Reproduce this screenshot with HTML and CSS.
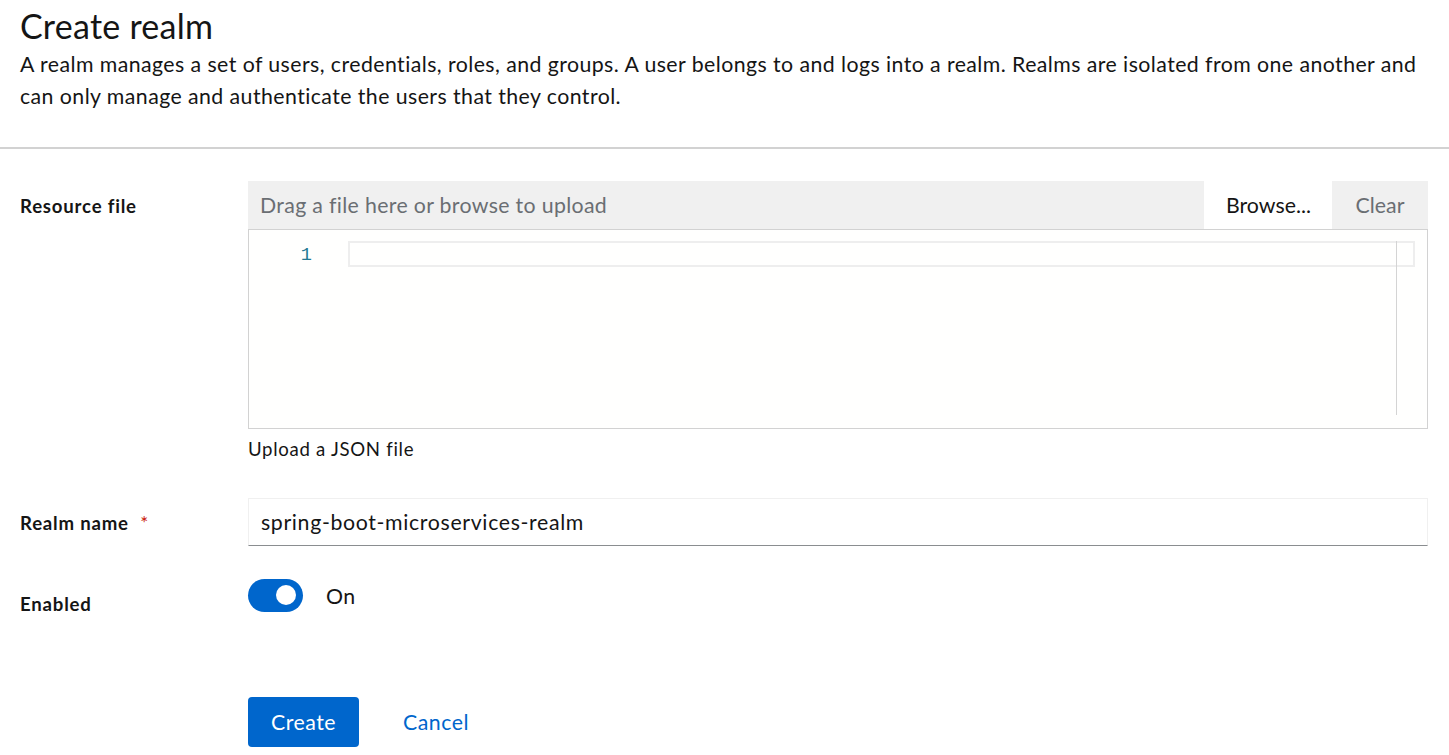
FILE: index.html
```html
<!DOCTYPE html>
<html lang="en">
<head>
<meta charset="utf-8">
<title>Create realm</title>
<link rel="stylesheet" href="styles.css">
</head>
<body>
<header class="page-header">
  <h1 class="title">Create realm</h1>
  <p class="description">A realm manages a set of users, credentials, roles, and groups. A user belongs to and logs into a realm. Realms are isolated from one another and can only manage and authenticate the users that they control.</p>
</header>
<div class="divider"></div>
<form class="form">
  <div class="label">Resource file</div>
  <div class="control">
    <div class="upload-bar">
      <span class="upload-placeholder">Drag a file here or browse to upload</span>
      <button type="button" class="browse">Browse...</button>
      <button type="button" class="clear">Clear</button>
    </div>
    <div class="editor">
      <div class="gutter"><span class="line-no">1</span></div>
      <div class="code">
        <div class="current-line"></div>
        <div class="ruler"></div>
      </div>
    </div>
    <div class="helper">Upload a JSON file</div>
  </div>

  <div class="label">Realm name <span class="required">*</span></div>
  <div class="control">
    <div class="text-input">spring-boot-microservices-realm</div>
  </div>

  <div class="label row-enabled">Enabled</div>
  <div class="control switch-row row-enabled">
    <span class="switch"><span class="knob"></span></span>
    <span class="switch-label">On</span>
  </div>

  <div class="label empty"></div>
  <div class="control actions">
    <button type="button" class="btn-primary">Create</button>
    <button type="button" class="btn-link">Cancel</button>
  </div>
</form>
</body>
</html>
```
FILE: styles.css
```css
* { box-sizing: border-box; }
html, body { margin: 0; padding: 0; background: #fff; }
body {
  font-family: "Lato", "Open Sans", sans-serif;
  color: #151515;
  width: 1449px;
  height: 755px;
  overflow: hidden;
}
.page-header {
  padding: 5px 20px 0 20px;
  height: 147px;
}
.title {
  margin: 0;
  font-family: "Lato", sans-serif;
  font-weight: 400;
  font-size: 34px;
  line-height: 41px;
  letter-spacing: 0.25px;
  color: #151515;
}
.description {
  margin: 2px 0 0 0;
  font-size: 21.3px;
  line-height: 32px;
  letter-spacing: 0.43px;
  color: #151515;
}
.divider {
  height: 2px;
  background: #d2d2d2;
}
.form {
  display: grid;
  grid-template-columns: 228px 1fr;
  padding: 32px 21px 0 20px;
  row-gap: 36px;
}
.label {
  font-size: 18.6px;
  font-weight: 700;
  line-height: 26px;
  letter-spacing: 0.8px;
  padding-top: 12px;
}
.required { color: #c9190b; font-weight: 400; margin-left: 6px; }
.control { min-width: 0; }
.upload-bar {
  display: flex;
  height: 48px;
  background: #f0f0f0;
  align-items: stretch;
}
.upload-placeholder {
  flex: 1;
  padding-left: 12px;
  display: flex;
  align-items: center;
  font-size: 21.3px;
  letter-spacing: 0.33px;
  color: #6a6e73;
}
.upload-bar button {
  font-family: inherit;
  font-size: 21.3px;
  border: 0;
  padding: 0 22px;
  cursor: pointer;
}
.browse { background: #fff; color: #151515; width: 128px; }
.clear { background: #f0f0f0; color: #6a6e73; width: 96px; }
.editor {
  height: 200px;
  border: 1px solid #d2d2d2;
  background: #fffffe;
  display: flex;
}
.gutter {
  width: 99px;
  padding-top: 13px;
  display: flex;
  justify-content: flex-end;
  padding-right: 36px;
}
.line-no {
  font-family: "Liberation Mono", monospace;
  font-size: 18.6px;
  line-height: 25px;
  height: 25px;
  color: #237893;
}
.code {
  flex: 1;
  position: relative;
  padding: 11px 12px 0 0;
}
.current-line {
  height: 26px;
  border: 2px solid #eeeeee;
}
.ruler {
  position: absolute;
  top: 11px;
  bottom: 13px;
  right: 30px;
  width: 1px;
  background: #d4d4d4;
}
.helper {
  margin-top: 7px;
  font-size: 18.6px;
  line-height: 26px;
  letter-spacing: 0.7px;
  color: #151515;
}
.text-input {
  height: 48px;
  border: 1px solid #f0f0f0;
  border-bottom-color: #8a8d90;
  padding: 0 12px;
  display: flex;
  align-items: center;
  font-size: 21.3px;
  letter-spacing: 0.65px;
}
.row-enabled { margin-top: -3px; }
.switch-row {
  display: flex;
  align-items: center;
  gap: 23px;
  height: 33px;
}
.switch {
  width: 55px;
  height: 33px;
  border-radius: 17px;
  background: #0066cc;
  position: relative;
  display: inline-block;
}
.knob {
  position: absolute;
  width: 20px;
  height: 20px;
  border-radius: 50%;
  background: #fff;
  top: 6px;
  right: 7px;
}
.switch-label {
  font-size: 21.3px;
  line-height: 26px;
  letter-spacing: 0.5px;
}
.empty { padding: 0; }
.actions {
  display: flex;
  align-items: center;
  gap: 22px;
  margin-top: 44px;
}
.btn-primary {
  width: 111px;
  height: 50px;
  background: #0066cc;
  color: #fff;
  border: 0;
  border-radius: 4px;
  font-family: inherit;
  font-size: 21.3px;
  letter-spacing: 0.5px;
}
.btn-link {
  background: none;
  border: 0;
  color: #0066cc;
  font-family: inherit;
  font-size: 21.3px;
  letter-spacing: 0.5px;
  padding: 0 22px;
}
```
